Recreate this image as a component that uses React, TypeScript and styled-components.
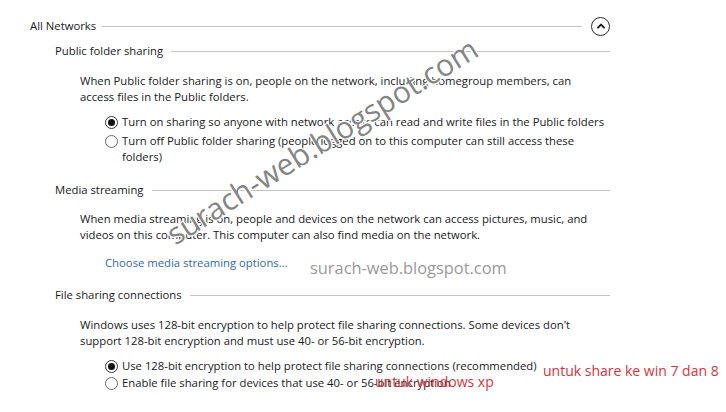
import React from "react";
import styled, { createGlobalStyle } from "styled-components";

const Global = createGlobalStyle`
  html, body { margin: 0; padding: 0; background: #ffffff; }
  body { font-family: "Open Sans", "Noto Sans", sans-serif; color: #1a1a1a; }
  #root { width: 726px; height: 412px; }
`;

const Page = styled.div`
  position: relative;
  width: 726px;
  height: 412px;
  overflow: hidden;
  box-sizing: border-box;
  padding: 16px 0 0 30px;
  background: #ffffff;
  font-size: 11.3px;
  line-height: 16px;
`;

const Panel = styled.div`
  width: 580px;
  display: flex;
  flex-direction: column;
`;

const GroupHeader = styled.div`
  display: flex;
  align-items: center;
  height: 20px;
  gap: 6px;
`;

const Title = styled.span`
  white-space: nowrap;
  color: #1a1a1a;
`;

const Rule = styled.div`
  flex: 1;
  height: 1px;
  background: #c4c4c4;
`;

const CollapseButton = styled.button`
  width: 19px;
  height: 19px;
  margin-left: 3px;
  border-radius: 50%;
  border: 1.5px solid #2c2c2c;
  background: #ffffff;
  padding: 0;
  display: flex;
  align-items: center;
  justify-content: center;
  box-sizing: border-box;
`;

const Section = styled.section<{ $top: number }>`
  margin-top: ${(p) => p.$top}px;
  padding-left: 25px;
  display: flex;
  flex-direction: column;
`;

const SectionHeader = styled.div`
  display: flex;
  align-items: center;
  gap: 8px;
  height: 16px;
`;

const Description = styled.p<{ $top: number }>`
  margin: ${(p) => p.$top}px 0 0 25px;
  line-height: 16px;
`;

const Options = styled.div<{ $gap: number }>`
  margin: 9px 0 0 50px;
  display: flex;
  flex-direction: column;
  gap: ${(p) => p.$gap}px;
`;

const RadioRow = styled.label`
  display: flex;
  align-items: flex-start;
  gap: 4px;
`;

const RadioCircle = styled.span<{ $checked?: boolean }>`
  flex: none;
  width: 13px;
  height: 13px;
  margin-top: 2px;
  box-sizing: border-box;
  border-radius: 50%;
  border: 1px solid ${(p) => (p.$checked ? "#3a3a3a" : "#6e6e6e")};
  background: #ffffff;
  display: flex;
  align-items: center;
  justify-content: center;
  &::after {
    content: "";
    display: ${(p) => (p.$checked ? "block" : "none")};
    width: 7px;
    height: 7px;
    border-radius: 50%;
    background: #111111;
  }
`;

const LinkText = styled.a<{ $top: number }>`
  margin: ${(p) => p.$top}px 0 0 50px;
  color: #2f6aa8;
  text-decoration: none;
  cursor: pointer;
  width: max-content;
`;

const Watermark = styled.span`
  position: absolute;
  left: 310px;
  top: 258px;
  font-size: 16.4px;
  line-height: 20px;
  color: #9a9a9a;
  white-space: nowrap;
`;

const DiagonalMark = styled.span`
  position: absolute;
  left: 322px;
  top: 141px;
  transform: translate(-50%, -50%) rotate(-32deg);
  font-size: 30px;
  line-height: 36px;
  color: #858585;
  white-space: nowrap;
  text-shadow: 1px 0 0 #fff, -1px 0 0 #fff, 0 1px 0 #fff, 0 -1px 0 #fff,
    1px 1px 0 #fff, -1px -1px 0 #fff, 1px -1px 0 #fff, -1px 1px 0 #fff;
`;

const Note = styled.span<{ $left: number; $top: number }>`
  position: absolute;
  left: ${(p) => p.$left}px;
  top: ${(p) => p.$top}px;
  font-size: 14px;
  line-height: 18px;
  color: #d8343c;
  white-space: nowrap;
`;

const Caret = () => (
  <svg width="10" height="10" viewBox="0 0 10 10">
    <polyline
      points="2,6.6 5,3.6 8,6.6"
      fill="none"
      stroke="#1a1a1a"
      strokeWidth="2"
      strokeLinecap="round"
      strokeLinejoin="round"
    />
  </svg>
);

const Radio = ({ checked, children }: { checked?: boolean; children: React.ReactNode }) => (
  <RadioRow>
    <RadioCircle $checked={checked} />
    <span>{children}</span>
  </RadioRow>
);

export default function App() {
  return (
    <>
      <Global />
      <Page>
        <Panel>
          <GroupHeader>
            <Title>All Networks</Title>
            <Rule />
            <CollapseButton aria-label="Collapse">
              <Caret />
            </CollapseButton>
          </GroupHeader>

          <Section $top={7}>
            <SectionHeader>
              <Title>Public folder sharing</Title>
              <Rule />
            </SectionHeader>
            <Description $top={14}>
              When Public folder sharing is on, people on the network, including homegroup members, can
              <br />
              access files in the Public folders.
            </Description>
            <Options $gap={3}>
              <Radio checked>
                Turn on sharing so anyone with network access can read and write files in the Public folders
              </Radio>
              <Radio>
                Turn off Public folder sharing (people logged on to this computer can still access these
                <br />
                folders)
              </Radio>
            </Options>
          </Section>

          <Section $top={17}>
            <SectionHeader>
              <Title>Media streaming</Title>
              <Rule />
            </SectionHeader>
            <Description $top={13}>
              When media streaming is on, people and devices on the network can access pictures, music, and
              <br />
              videos on this computer. This computer can also find media on the network.
            </Description>
            <LinkText $top={12}>Choose media streaming options...</LinkText>
          </Section>

          <Section $top={16}>
            <SectionHeader>
              <Title>File sharing connections</Title>
              <Rule />
            </SectionHeader>
            <Description $top={14}>
              Windows uses 128-bit encryption to help protect file sharing connections. Some devices don't
              <br />
              support 128-bit encryption and must use 40- or 56-bit encryption.
            </Description>
            <Options $gap={1}>
              <Radio checked>Use 128-bit encryption to help protect file sharing connections (recommended)</Radio>
              <Radio>Enable file sharing for devices that use 40- or 56-bit encryption</Radio>
            </Options>
          </Section>
        </Panel>

        <Watermark>surach-web.blogspot.com</Watermark>
        <DiagonalMark>surach-web.blogspot.com</DiagonalMark>
        <Note $left={543} $top={362}>untuk share ke win 7 dan 8</Note>
        <Note $left={375} $top={373}>untuk windows xp</Note>
      </Page>
    </>
  );
}
